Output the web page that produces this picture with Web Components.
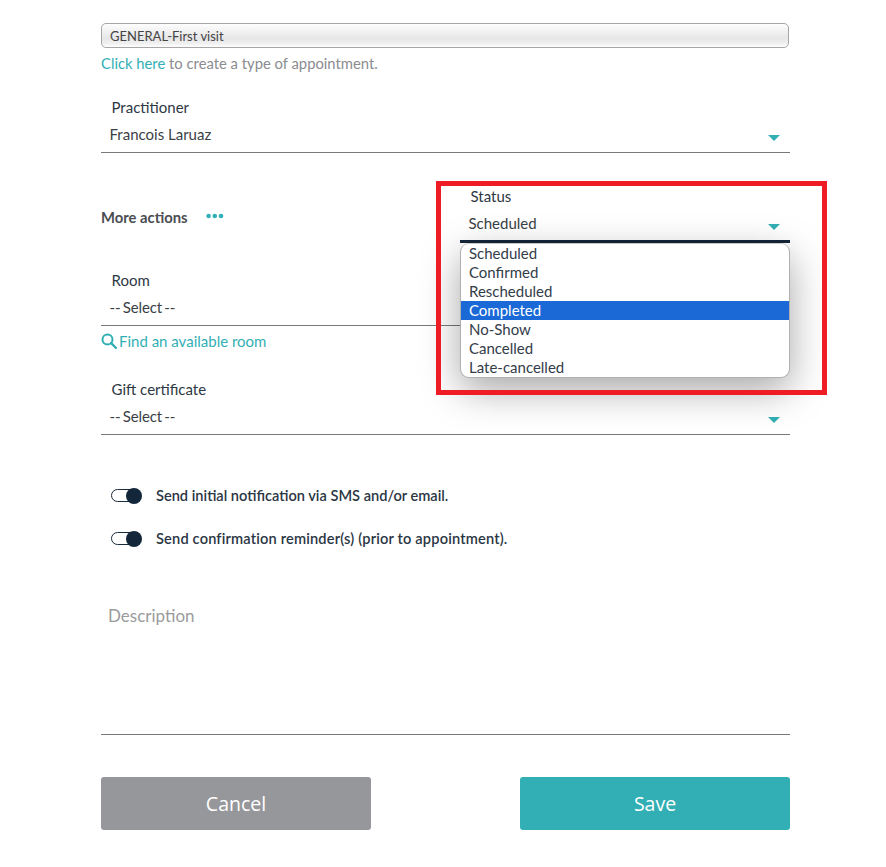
<!DOCTYPE html>
<html lang="en">
<head>
<meta charset="utf-8">
<title>Appointment</title>
<style>
  html, body { margin: 0; background: #fff; }
  body { font-family: Lato, "Liberation Sans", sans-serif; font-size: 14px; color: #2b3644; }
</style>
</head>
<body>
<template id="t-page">
  <style>
    :host { display: flex; flex-direction: column; box-sizing: border-box; width: 886px; height: 867px; padding: 23px 96px 37px 101px; position: relative; overflow: hidden; }
    .link { margin-top: 5px; line-height: 20px; font-size: 14.8px; color: #8a8c90; }
    .link a { color: #32afb5; text-decoration: none; }
    .actions { display: grid; grid-template-columns: 359px 330px; margin-top: 34px; height: 56px; }
    .more { display: flex; align-items: center; height: 60px; font-size: 14.8px; font-weight: 700; color: #4a4d52; }
    .more svg { margin-left: 18px; margin-top: -3px; }
    .room { margin-top: 28px; }
    .find { display: flex; align-items: center; gap: 2px; margin-top: 5px; line-height: 20px; font-size: 15px; color: #32afb5; }
    .gift { margin-top: 29px; }
    .toggles { margin-top: 39px; }
    .buttons { display: flex; justify-content: space-between; margin-top: 42px; }
    x-description { margin-top: 46px; }
    .none { word-spacing: -1.5px; letter-spacing: -.1px; }
  </style>
  <x-type-select>GENERAL-First visit</x-type-select>
  <div class="link"><a>Click here</a> to create a type of appointment.</div>
  <x-field style="margin-top:25px" label="Practitioner" tight>Francois Laruaz</x-field>
  <div class="actions">
    <div class="more">More actions
      <svg width="18" height="6" viewBox="0 0 18 6" aria-hidden="true"><circle cx="2.6" cy="3" r="2.3" fill="#32afb5"/><circle cx="8.8" cy="3" r="2.3" fill="#32afb5"/><circle cx="15" cy="3" r="2.3" fill="#32afb5"/></svg>
    </div>
    <x-field label="Status" focused>Scheduled
      <x-options slot="over">
        <x-option>Scheduled</x-option>
        <x-option>Confirmed</x-option>
        <x-option>Rescheduled</x-option>
        <x-option selected>Completed</x-option>
        <x-option>No-Show</x-option>
        <x-option>Cancelled</x-option>
        <x-option>Late-cancelled</x-option>
      </x-options>
    </x-field>
  </div>
  <x-field class="room" label="Room" tight><span class="none">-- Select --</span></x-field>
  <div class="find">
    <svg width="16" height="16" viewBox="0 0 16 16" aria-hidden="true"><circle cx="6.5" cy="6.5" r="5" fill="none" stroke="#32afb5" stroke-width="2"/><path d="M10.2 10.2 L15 15" stroke="#32afb5" stroke-width="2.4" stroke-linecap="round"/></svg>
    <span>Find an available room</span>
  </div>
  <x-field class="gift" label="Gift certificate" tight><span class="none">-- Select --</span></x-field>
  <div class="toggles">
    <x-toggle>Send initial notification via SMS and/or email.</x-toggle>
    <x-toggle style="letter-spacing:.17px">Send confirmation reminder(s) (prior to appointment).</x-toggle>
  </div>
  <x-description>Description</x-description>
  <div class="buttons">
    <x-button color="#96979b">Cancel</x-button>
    <x-button color="#32afb5">Save</x-button>
  </div>
  <x-callout></x-callout>
</template>

<template id="t-type-select">
  <style>
    :host { display: flex; align-items: center; box-sizing: border-box; height: 25px; margin-right: 1px; padding-left: 8px; padding-top: 1px; border: 1px solid #a6a6a6; border-radius: 5px; font-size: 13px; color: #444; background: linear-gradient(#fdfdfd 0%, #f4f4f4 25%, #e6e6e6 62%, #f0f0f0 85%, #fff 100%); }
  </style>
  <slot></slot>
</template>

<template id="t-field">
  <style>
    :host { display: block; box-sizing: border-box; position: relative; height: 56px; border-bottom: 1px solid #77787a; color: #3a3f46; }
    :host([tight]) { height: 55px; }
    :host([focused]) { border-bottom: 3px solid #14263a; }
    .label { padding-left: 10.5px; line-height: 18px; font-size: 15px; color: #2e3845; }
    .value { display: flex; align-items: center; justify-content: space-between; margin-top: 9px; padding-left: 8.5px; padding-right: 10px; line-height: 18px; font-size: 15px; }
    svg { margin-top: 7px; }
  </style>
  <div class="label"></div>
  <div class="value"><span><slot></slot></span>
    <svg width="12" height="6" viewBox="0 0 12 6" aria-hidden="true"><path d="M0 0H12L6 6Z" fill="#32afb5"/></svg>
  </div>
  <slot name="over"></slot>
</template>

<template id="t-options">
  <style>
    :host { display: block; position: absolute; z-index: 2; left: 0; right: 0; top: 56px; box-sizing: border-box; height: 135px; padding: 0; border: 1px solid #b0b0b0; border-top-color: #c8c8c8; border-radius: 9px; background: #fff; overflow: hidden; box-shadow: 0 12px 38px rgba(0,0,0,.35); }
  </style>
  <slot></slot>
</template>

<template id="t-option">
  <style>
    :host { display: block; box-sizing: border-box; height: 19px; line-height: 19px; padding-left: 8px; font-size: 15px; color: #333c49; }
    :host([selected]) { background: #1a69d6; color: #fff; }
  </style>
  <slot></slot>
</template>

<template id="t-toggle">
  <style>
    :host { display: flex; align-items: center; height: 43px; padding-left: 10px; font-size: 14.6px; font-weight: 600; color: #2b3644; }
    .track { display: flex; align-items: center; justify-content: flex-end; box-sizing: border-box; width: 27px; height: 13px; margin-right: 4px; border: 1px solid #1a2b3c; border-radius: 7px; background: #fff; }
    .knob { flex: none; width: 16px; height: 16px; margin-right: -5px; border-radius: 50%; background: #14263a; }
    .text { margin-left: 14px; }
  </style>
  <span class="track"><span class="knob"></span></span><span class="text"><slot></slot></span>
</template>

<template id="t-description">
  <style>
    :host { display: block; box-sizing: border-box; height: 129px; padding-left: 7px; line-height: 20px; font-size: 17px; color: #9b9b9b; border-bottom: 1px solid #77787a; }
  </style>
  <slot></slot>
</template>

<template id="t-button">
  <style>
    :host { display: flex; align-items: center; justify-content: center; width: 270px; height: 53px; border-radius: 3px; font-family: "Open Sans", sans-serif; font-size: 19.5px; color: #fff; }
  </style>
  <slot></slot>
</template>

<template id="t-callout">
  <style>
    :host { display: block; position: absolute; z-index: 3; left: 436px; top: 181px; box-sizing: border-box; width: 391px; height: 214px; border: 5px solid #ee1c25; pointer-events: none; }
  </style>
</template>

<script>
  function comp(tag, tpl, init) {
    customElements.define(tag, class extends HTMLElement {
      constructor() {
        super();
        const root = this.attachShadow({ mode: 'open' });
        root.appendChild(document.getElementById(tpl).content.cloneNode(true));
      }
      connectedCallback() { if (init) init(this, this.shadowRoot); }
    });
  }
  comp('x-type-select', 't-type-select');
  comp('x-field', 't-field', (el, root) => { root.querySelector('.label').textContent = el.getAttribute('label'); });
  comp('x-options', 't-options');
  comp('x-option', 't-option');
  comp('x-toggle', 't-toggle');
  comp('x-description', 't-description');
  comp('x-button', 't-button', (el) => { el.style.background = el.getAttribute('color'); });
  comp('x-callout', 't-callout');
  comp('x-appointment', 't-page');
  document.body.appendChild(document.createElement('x-appointment'));
</script>
</body>
</html>
